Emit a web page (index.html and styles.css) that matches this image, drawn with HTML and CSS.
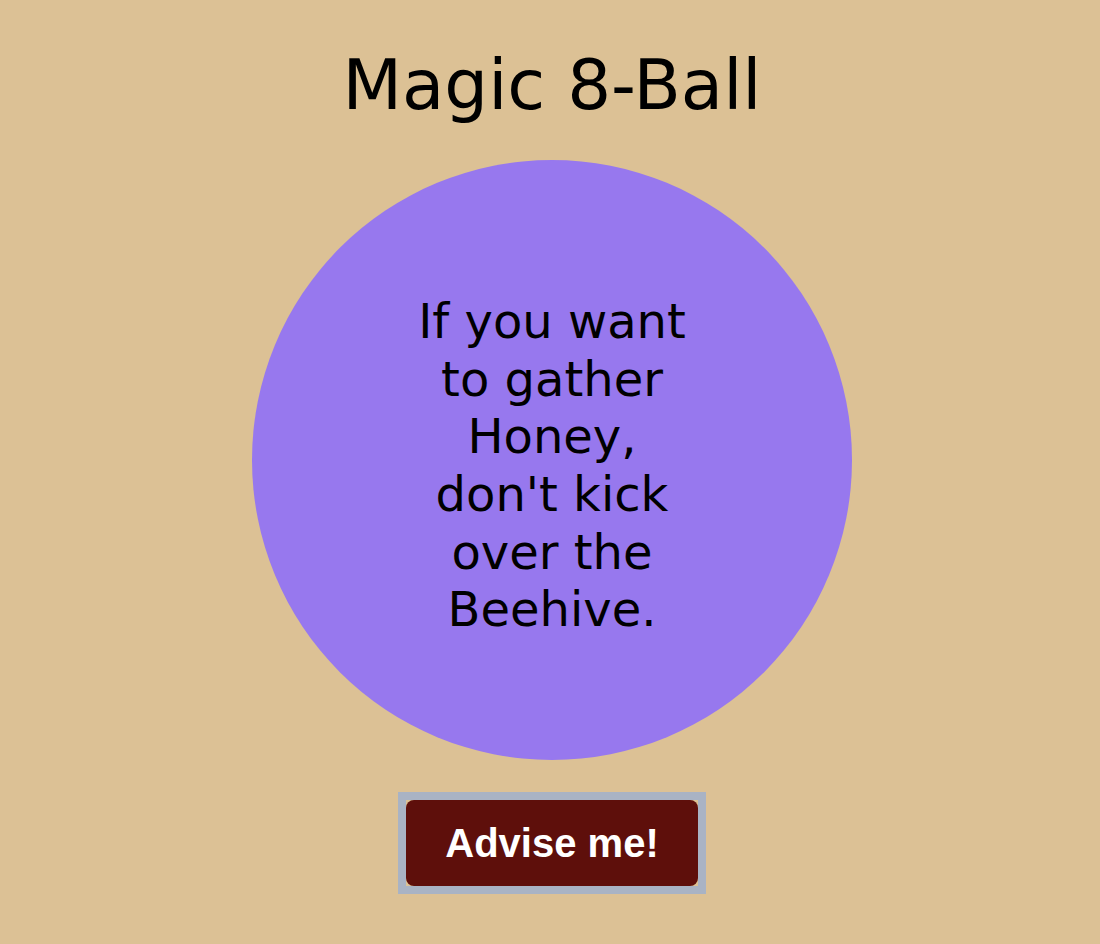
FILE: index.html
```html
<!DOCTYPE html>
<html lang="en">
<head>
<meta charset="utf-8">
<title>Magic 8-Ball</title>
<link rel="stylesheet" href="styles.css">
</head>
<body>
<main class="app">
  <h1 class="title">Magic 8-Ball</h1>
  <div class="ball">
    <p class="answer">If you want to gather Honey, don't kick over the Beehive.</p>
  </div>
  <div class="btn-frame">
    <button class="advise-btn" type="button">Advise me!</button>
  </div>
</main>
</body>
</html>
```

FILE: styles.css
```css
html, body {
  margin: 0;
  padding: 0;
}
body {
  background: #dcc195;
  min-height: 944px;
  font-family: "DejaVu Sans", sans-serif;
  color: #000;
}
.app {
  display: flex;
  flex-direction: column;
  align-items: center;
  padding-top: 45px;
  padding-left: 4px;
}
.title {
  margin: 0;
  font-size: 69px;
  line-height: 80px;
  font-weight: normal;
  color: #000;
}
.ball {
  margin-top: 35px;
  width: 600px;
  height: 600px;
  border-radius: 50%;
  background: #9778ee;
  display: flex;
  align-items: center;
  justify-content: center;
}
.answer {
  margin: 0;
  padding-top: 12px;
  width: 290px;
  text-align: center;
  font-size: 48px;
  line-height: 57.6px;
}
.btn-frame {
  margin-top: 32px;
  border: 8px solid #a9b3c4;
  display: flex;
}
.advise-btn {
  width: 292px;
  height: 86px;
  border: none;
  border-radius: 8px;
  background: #5e0f0b;
  color: #fff;
  font-family: "Liberation Sans", Arial, sans-serif;
  font-weight: bold;
  font-size: 40px;
  padding: 0;
  cursor: pointer;
}
```
